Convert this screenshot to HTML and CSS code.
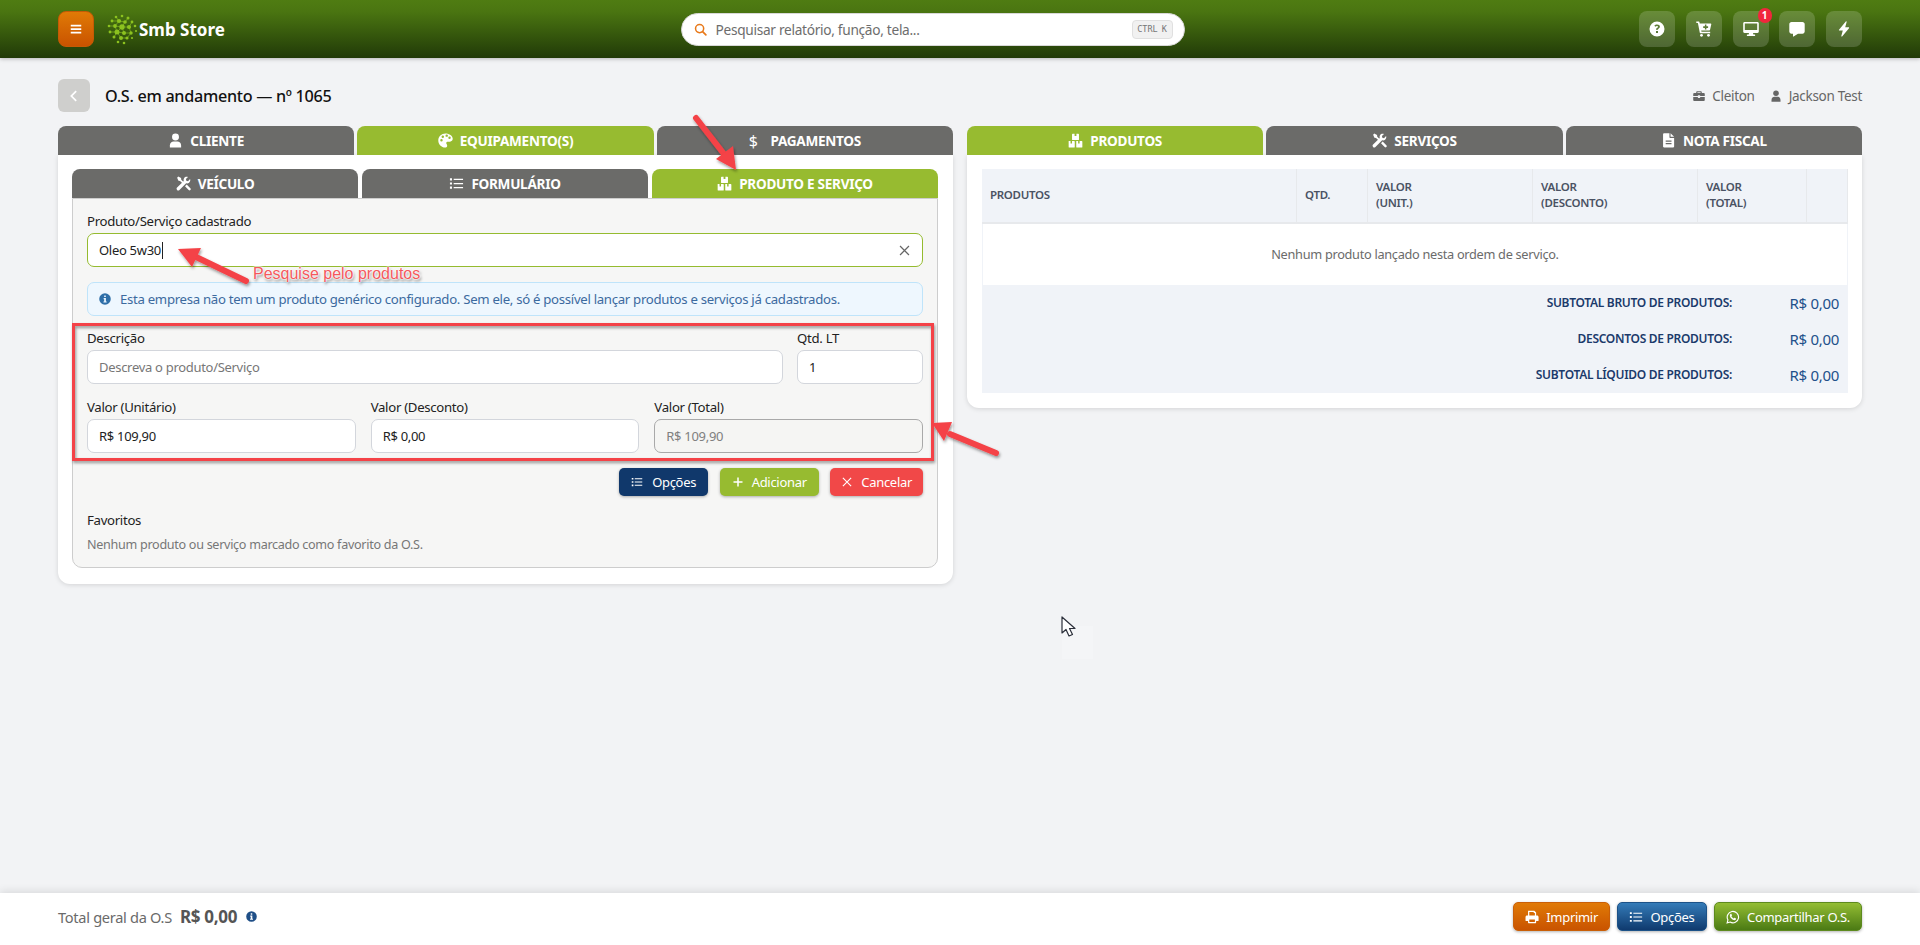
FILE: index.html
```html
<!DOCTYPE html>
<html lang="pt-BR">
<head>
    <meta charset="utf-8">
    <title>O.S. em andamento</title>
    <link rel="stylesheet" href="styles.css">
</head>
<body>
    <svg class="icon-defs" width="0" height="0">
        <symbol id="i-bars" viewBox="0 0 16 16"><path d="M2 3h12v2H2zM2 7h12v2H2zM2 11h12v2H2z"/></symbol>
        <symbol id="i-user" viewBox="0 0 16 16"><circle cx="8" cy="4.2" r="3.7"/><path d="M2 15.5v-2.3C2 10.6 4 9 6 9h4c2 0 4 1.600 4 4.200v2.300z"/></symbol>
        <symbol id="i-palette" viewBox="0 0 16 16"><path fill-rule="evenodd" d="M8 .5C3.700.5.300 3.800.300 8c0 4.300 3.400 7.500 7.300 7.500 1.500 0 2.200-1 2.200-2 0-1.300-1-1.700-1-2.800 0-1 .8-1.500 1.800-1.500h2.200c1.500 0 2.900-1.100 2.900-3C15.700 2.900 12 .5 8 .5zM3.700 9a1.300 1.300 0 1 1 0-2.600 1.300 1.300 0 0 1 0 2.600zm1.400-3.800a1.300 1.300 0 1 1 0-2.600 1.300 1.300 0 0 1 0 2.600zm4.200-1.100a1.300 1.300 0 1 1 0-2.600 1.300 1.300 0 0 1 0 2.600zm3 2.300a1.300 1.300 0 1 1 0-2.600 1.300 1.300 0 0 1 0 2.600z"/></symbol>
        <symbol id="i-tools" viewBox="0 0 16 16"><path d="M1.200 1.800 2.400.6l3 1.600.2 1.700 3.600 3.600-1.300 1.300-3.600-3.600-1.700-.2z"/><path d="M15 3.300l-2.200 2.200-1.800-.4-.4-1.800L12.800 1c-1.700-.6-3.400-.1-4.200 1.300-.6 1-.6 2-.3 2.900L.9 12.600a1.800 1.800 0 0 0 2.500 2.500l7.400-7.400c1 .3 2 .2 2.900-.3 1.400-.9 1.900-2.800 1.300-4.100z"/><path d="M9.600 10.900l1.800-1.800 3.900 3.900a1.300 1.300 0 0 1-1.800 1.900z"/></symbol>
        <symbol id="i-list" viewBox="0 0 16 16"><path d="M1 2.500h2.200v2.200H1zM1 6.900h2.200v2.200H1zM1 11.300h2.200v2.200H1zM5 3h10v1.300H5zM5 7.400h10v1.300H5zM5 11.800h10v1.300H5z"/></symbol>
        <symbol id="i-boxes" viewBox="0 0 16 16"><path d="M5 .8h2v2.500h2V.8h2c.4 0 .7.3.7.7v5.300c0 .4-.3.700-.7.700H5c-.4 0-.7-.3-.7-.7V1.500c0-.4.3-.7.700-.7z"/><path d="M.7 8.600h2v2.500h1.600V8.600h2.300c.3 0 .6.300.6.600v5.600c0 .3-.3.600-.6.600H1.300c-.3 0-.6-.3-.6-.6z"/><path d="M8.800 8.600h2v2.500h1.600V8.600h2.300c.3 0 .6.300.6.600v5.600c0 .3-.3.600-.6.600H9.400c-.3 0-.6-.3-.6-.6z"/></symbol>
        <symbol id="i-file" viewBox="0 0 16 16"><path fill-rule="evenodd" d="M3.200.3H9v4.300c0 .4.300.7.700.7H14v9.200c0 .5-.4 1-1 1H3.200c-.6 0-1-.5-1-1V1.300c0-.6.400-1 1-1zM5 8v1.300h6.200V8zm0 2.700V12h6.200v-1.300zM10.200.3 14 4.100h-3.800z"/></symbol>
        <symbol id="i-search" viewBox="0 0 16 16"><circle cx="6.900" cy="6.900" r="5" fill="none" stroke="currentColor" stroke-width="1.900"/><path d="m10.600 10.600 4 4" fill="none" stroke="currentColor" stroke-width="2.100" stroke-linecap="round"/></symbol>
        <symbol id="i-help" viewBox="0 0 16 16"><path fill-rule="evenodd" d="M8 .5a7.500 7.500 0 1 0 0 15 7.500 7.500 0 0 0 0-15zM7 10h2v2H7zm0-1.200V8c0-1 2-1.200 2-2.300 0-.5-.5-.8-1-.8-.7 0-1.100.3-1.500.8L5.300 4.800C6 3.900 6.900 3.400 8.100 3.400c1.600 0 2.800.9 2.800 2.200 0 1.900-2 2-2 3.200z"/></symbol>
        <symbol id="i-cart" viewBox="0 0 16 16"><path fill-rule="evenodd" d="M.3.600h2.500c.3 0 .5.200.6.500l.3 1.300h11c.4 0 .7.400.6.800l-1.300 5.800c-.1.300-.3.500-.6.500H5.200l.3 1.300h8.700v1.500H4.400c-.3 0-.5-.2-.6-.5L1.900 2.100H.3zM8.900 3.600v1.700H7.200v1.600h1.700v1.700h1.500V6.900h1.700V5.300h-1.700V3.600z"/><circle cx="5.500" cy="14.300" r="1.400"/><circle cx="12.500" cy="14.300" r="1.400"/></symbol>
        <symbol id="i-desktop" viewBox="0 0 16 16"><path fill-rule="evenodd" d="M1.500 1h13c.7 0 1.300.6 1.300 1.300v8.500c0 .7-.6 1.200-1.300 1.200H10l.4 1.600h1.700V15H3.900v-1.400h1.700L6 12H1.500C.8 12 .2 11.500.2 10.800V2.300C.2 1.600.8 1 1.500 1zm.3 1.600V9h12.400V2.600z"/></symbol>
        <symbol id="i-comment" viewBox="0 0 16 16"><path d="M2.500 1h11c1.200 0 2.200 1 2.200 2.200v7.300c0 1.200-1 2.200-2.200 2.200H9L4.600 15.600c-.3.200-.6 0-.6-.3v-2.600H2.500c-1.200 0-2.200-1-2.200-2.200V3.200C.3 2 1.300 1 2.500 1z"/></symbol>
        <symbol id="i-bolt" viewBox="0 0 16 16"><path d="M9.800.4 3 8.700c-.3.400 0 .9.400.9h3.400L5.300 15c-.1.500.5.800.8.400l6.900-8.200c.3-.4 0-.9-.4-.9H9.200l1.500-5.500c.1-.5-.6-.8-.9-.4z"/></symbol>
        <symbol id="i-briefcase" viewBox="0 0 16 16"><path d="M5.500 1.500h5c.7 0 1.200.5 1.200 1.200V4h2.800c.7 0 1.200.5 1.200 1.200V8H9.500V7h-3v1H.3V5.200C.3 4.500.8 4 1.500 4h2.800V2.700c0-.7.500-1.200 1.200-1.200zm.4 1.500V4h4.200V3zM.3 9.200h6.200v1.300h3V9.200h6.200v4.100c0 .7-.5 1.200-1.200 1.200h-13c-.7 0-1.200-.5-1.200-1.200z"/></symbol>
        <symbol id="i-info" viewBox="0 0 16 16"><path fill-rule="evenodd" d="M8 .3a7.700 7.700 0 1 0 0 15.400A7.700 7.700 0 0 0 8 .3zM6.900 3.200h2.200v2.200H6.900zM6.200 6.700h3v4.600h1v1.500H5.900v-1.500h1V8.200h-.7z"/></symbol>
        <symbol id="i-print" viewBox="0 0 16 16"><path fill-rule="evenodd" d="M3.500.8h7.200l2 2v3.400h1.100c.9 0 1.700.8 1.700 1.700V12c0 .4-.3.700-.7.700h-2.100v2c0 .3-.3.500-.5.500H4c-.3 0-.5-.2-.5-.5v-2H1.300c-.4 0-.7-.3-.7-.7V7.900c0-.9.800-1.700 1.700-1.700h1.200zm1.400 1.400v4h6.400V3.500h-1.300V2.200zM4.900 10.900v2.900h6.400v-2.900z"/></symbol>
        <symbol id="i-whatsapp" viewBox="0 0 16 16"><path fill="none" stroke="currentColor" stroke-width="1.300" d="M1.300 14.700l.9-3.400A6.500 6.500 0 1 1 4.700 13.800z"/><path d="M5.600 4.400c.3 0 .5 0 .6.300l.6 1.400c.1.200 0 .4-.1.500l-.5.600c.6 1.200 1.400 1.900 2.600 2.500l.6-.7c.1-.2.300-.2.500-.1l1.400.7c.2.100.3.200.3.400 0 1.100-1 1.600-1.800 1.600-2.400-.1-5.300-2.800-5.400-5.300 0-.9.400-1.500 1-1.900z"/></symbol>
        <symbol id="i-plus" viewBox="0 0 16 16"><path d="M7 2h2v5h5v2H9v5H7V9H2V7h5z"/></symbol>
        <symbol id="i-close" viewBox="0 0 16 16"><path d="M2.500 2.500l11 11M13.500 2.500l-11 11" fill="none" stroke="currentColor" stroke-width="1.500"/></symbol>
        <symbol id="i-back" viewBox="0 0 16 16"><path d="M10.500 2.500 5 8l5.500 5.500" fill="none" stroke="currentColor" stroke-width="2"/></symbol>
    </svg>

    <header class="topbar">
        <div class="brand">
            <button class="menu-btn"><svg class="ico"><use href="#i-bars"/></svg></button>
            <svg class="logo" viewBox="0 0 32 32">
                <path d="M10 4 13 8 9 13 11 19 15 25M22 5 19 9 16 14 11 19M16 14 23 14 25 20 21 25 15 25M18 20 16 14M23 14 26 9M6 8 13 8 19 9M3 13 9 13 16 14M4 19 11 19 18 20 25 20M8 24 11 19" fill="none" stroke="#7fb51f" stroke-width=".7"/>
                <g fill="#8cc21f">
                    <circle cx="16" cy="3" r="1.300"/><circle cx="10" cy="4" r="1.300"/><circle cx="22" cy="5" r="1.500"/>
                    <circle cx="6" cy="8" r="1.400"/><circle cx="13" cy="8" r="2.100"/><circle cx="19" cy="9" r="1.800"/><circle cx="26" cy="9" r="1.400"/>
                    <circle cx="3" cy="13" r="1.300"/><circle cx="9" cy="13" r="1.900"/><circle cx="16" cy="14" r="2.700"/><circle cx="23" cy="14" r="2.100"/><circle cx="29" cy="13" r="1.300"/>
                    <circle cx="4" cy="19" r="1.400"/><circle cx="11" cy="19" r="2.500"/><circle cx="18" cy="20" r="2"/><circle cx="25" cy="20" r="1.700"/><circle cx="30" cy="18" r="1.100"/>
                    <circle cx="8" cy="24" r="1.500"/><circle cx="15" cy="25" r="2"/><circle cx="21" cy="25" r="1.600"/><circle cx="26" cy="25" r="1.100"/>
                    <circle cx="12" cy="29" r="1.300"/><circle cx="18" cy="30" r="1.300"/>
                </g>
            </svg>
            <span class="brand-name">Smb Store</span>
        </div>

        <div class="search">
            <svg class="ico search-ico"><use href="#i-search"/></svg>
            <span class="search-text">Pesquisar relatório, função, tela...</span>
            <kbd class="search-kbd">CTRL K</kbd>
        </div>

        <div class="top-actions">
            <button class="top-btn"><svg class="ico"><use href="#i-help"/></svg></button>
            <button class="top-btn"><svg class="ico"><use href="#i-cart"/></svg></button>
            <button class="top-btn"><svg class="ico"><use href="#i-desktop"/></svg><span class="badge">1</span></button>
            <button class="top-btn"><svg class="ico"><use href="#i-comment"/></svg></button>
            <button class="top-btn"><svg class="ico"><use href="#i-bolt"/></svg></button>
        </div>
    </header>

    <main class="page">
        <div class="page-head">
            <div class="page-title">
                <button class="back-btn"><svg class="ico"><use href="#i-back"/></svg></button>
                <h1>O.S. em andamento — nº 1065</h1>
            </div>
            <div class="page-meta">
                <span><svg class="ico"><use href="#i-briefcase"/></svg>Cleiton</span>
                <span><svg class="ico"><use href="#i-user"/></svg>Jackson Test</span>
            </div>
        </div>

        <div class="columns">
            <section class="col">
                <div class="tabs">
                    <div class="tab"><svg class="ico"><use href="#i-user"/></svg>CLIENTE</div>
                    <div class="tab active"><svg class="ico"><use href="#i-palette"/></svg>EQUIPAMENTO(S)</div>
                    <div class="tab"><span class="tab-dollar">$</span>PAGAMENTOS</div>
                </div>
                <div class="card card-form">
                    <div class="tabs tabs-inner">
                        <div class="tab"><svg class="ico"><use href="#i-tools"/></svg>VEÍCULO</div>
                        <div class="tab"><svg class="ico"><use href="#i-list"/></svg>FORMULÁRIO</div>
                        <div class="tab active"><svg class="ico"><use href="#i-boxes"/></svg>PRODUTO E SERVIÇO</div>
                    </div>
                    <div class="panel">
                        <div class="field">
                            <label>Produto/Serviço cadastrado</label>
                            <div class="input input-search">
                                <span class="typed">Oleo 5w30</span>
                                <svg class="ico clear-ico"><use href="#i-close"/></svg>
                            </div>
                        </div>
                        <div class="alert">
                            <svg class="ico"><use href="#i-info"/></svg>
                            Esta empresa não tem um produto genérico configurado. Sem ele, só é possível lançar produtos e serviços já cadastrados.
                        </div>
                        <div class="row-desc">
                            <div class="field">
                                <label>Descrição</label>
                                <input class="input" placeholder="Descreva o produto/Serviço">
                            </div>
                            <div class="field">
                                <label>Qtd. LT</label>
                                <input class="input" value="1">
                            </div>
                        </div>
                        <div class="row-values">
                            <div class="field">
                                <label>Valor (Unitário)</label>
                                <input class="input" value="R$ 109,90">
                            </div>
                            <div class="field">
                                <label>Valor (Desconto)</label>
                                <input class="input" value="R$ 0,00">
                            </div>
                            <div class="field">
                                <label>Valor (Total)</label>
                                <input class="input input-off" value="R$ 109,90" disabled>
                            </div>
                        </div>
                        <div class="form-actions">
                            <button class="btn btn-navy"><svg class="ico"><use href="#i-list"/></svg>Opções</button>
                            <button class="btn btn-green"><svg class="ico"><use href="#i-plus"/></svg>Adicionar</button>
                            <button class="btn btn-red"><svg class="ico"><use href="#i-close"/></svg>Cancelar</button>
                        </div>
                        <div class="fav-title">Favoritos</div>
                        <p class="fav-empty">Nenhum produto ou serviço marcado como favorito da O.S.</p>
                    </div>
                </div>
            </section>

            <section class="col">
                <div class="tabs">
                    <div class="tab active"><svg class="ico"><use href="#i-boxes"/></svg>PRODUTOS</div>
                    <div class="tab"><svg class="ico"><use href="#i-tools"/></svg>SERVIÇOS</div>
                    <div class="tab"><svg class="ico"><use href="#i-file"/></svg>NOTA FISCAL</div>
                </div>
                <div class="card card-items">
                    <table class="items">
                        <colgroup>
                            <col class="c-prod"><col class="c-qtd"><col class="c-val"><col class="c-val"><col class="c-tot"><col>
                        </colgroup>
                        <thead>
                            <tr>
                                <th>PRODUTOS</th>
                                <th>QTD.</th>
                                <th>VALOR<br>(UNIT.)</th>
                                <th>VALOR<br>(DESCONTO)</th>
                                <th>VALOR<br>(TOTAL)</th>
                                <th></th>
                            </tr>
                        </thead>
                        <tbody>
                            <tr><td colspan="6">Nenhum produto lançado nesta ordem de serviço.</td></tr>
                        </tbody>
                    </table>
                    <div class="totals">
                        <div class="total-row"><span>SUBTOTAL BRUTO DE PRODUTOS:</span><b>R$ 0,00</b></div>
                        <div class="total-row"><span>DESCONTOS DE PRODUTOS:</span><b>R$ 0,00</b></div>
                        <div class="total-row"><span>SUBTOTAL LÍQUIDO DE PRODUTOS:</span><b>R$ 0,00</b></div>
                    </div>
                </div>
            </section>
        </div>
    </main>

    <footer class="bottombar">
        <div class="grand-total">
            Total geral da O.S <strong>R$ 0,00</strong>
            <svg class="ico"><use href="#i-info"/></svg>
        </div>
        <div class="bottom-actions">
            <button class="btn2 btn2-orange"><svg class="ico"><use href="#i-print"/></svg>Imprimir</button>
            <button class="btn2 btn2-blue"><svg class="ico"><use href="#i-list"/></svg>Opções</button>
            <button class="btn2 btn2-green"><svg class="ico"><use href="#i-whatsapp"/></svg>Compartilhar O.S.</button>
        </div>
    </footer>

    <!-- anotacoes desenhadas por cima do print -->
    <svg class="notes" viewBox="0 0 1920 945">
        <defs>
            <filter id="soft" x="-20%" y="-20%" width="140%" height="140%">
                <feDropShadow dx="1" dy="2" stdDeviation="1.500" flood-color="#000" flood-opacity=".4"/>
            </filter>
        </defs>
        <g filter="url(#soft)">
            <rect x="73.500" y="324.500" width="859" height="135" fill="none" stroke="#f44246" stroke-width="3"/>
            <path d="M696 118 724 154" stroke="#f44246" stroke-width="6" stroke-linecap="round"/>
            <path d="M736 170 716 159 733 146z" fill="#f44246"/>
            <path d="M246 281 194 256" stroke="#f44246" stroke-width="6" stroke-linecap="round"/>
            <path d="M178 249 201 248 192 267z" fill="#f44246"/>
            <path d="M996 453 950 434" stroke="#f44246" stroke-width="6" stroke-linecap="round"/>
            <path d="M932 423 952 422 944 441z" fill="#f44246"/>
        </g>
        <g transform="translate(1062 617)">
            <rect x="0" y="9" width="31" height="33" fill="#f4f5f7"/>
            <path d="M0 0v16l4-3.500 3 6.500 3.500-1.500-3-6h5.500z" fill="#fff" stroke="#2b2f3a" stroke-width="1.200" stroke-linejoin="round"/>
        </g>
    </svg>
    <div class="note-text">Pesquise pelo produtos</div>
</body>
</html>
```

FILE: styles.css
```css
* {
    box-sizing: border-box;
}

html, body {
    height: 100%;
}

body {
    margin: 0;
    display: flex;
    flex-direction: column;
    min-height: 945px;
    background: #f2f3f5;
    color: #222;
    font-family: "Noto Sans", "Open Sans", sans-serif;
    font-size: 13px;
    letter-spacing: -0.3px;
    overflow: hidden;
}

button {
    font-family: inherit;
    letter-spacing: inherit;
    cursor: pointer;
}

.icon-defs {
    position: absolute;
}

.ico {
    display: block;
    flex: none;
    width: 14px;
    height: 14px;
    fill: currentColor;
}

/* barra de cima */
.topbar {
    flex: none;
    height: 58px;
    padding: 0 58px;
    display: flex;
    align-items: center;
    justify-content: space-between;
    background: linear-gradient(#4f7c12, #4a7511 20%, #213a08);
    box-shadow: 0 1px 4px rgba(0, 0, 0, .25);
}

.brand {
    display: flex;
    align-items: center;
    width: 168px;
}

.menu-btn {
    width: 36px;
    height: 36px;
    padding: 0;
    display: flex;
    align-items: center;
    justify-content: center;
    color: #fff;
    border: 1px solid #c55a05;
    border-radius: 8px;
    background: linear-gradient(#e07a06, #c95300);
}

.logo {
    width: 32px;
    height: 32px;
    margin-left: 12px;
    flex: none;
}

.brand-name {
    margin-left: 1px;
    color: #fff;
    font-size: 17px;
    font-weight: 700;
    letter-spacing: 0;
    white-space: nowrap;
}

.search {
    width: 504px;
    height: 33px;
    padding: 0 11px 0 12px;
    display: flex;
    align-items: center;
    background: #fff;
    border: 1px solid #d8d8d8;
    border-radius: 17px;
}

.search-ico {
    width: 13px;
    height: 13px;
    color: #e8791a;
    fill: currentColor;
}

.search-text {
    margin-left: 9px;
    flex: 1;
    color: #6d6d6d;
    font-size: 13.700px;
}

.search-kbd {
    width: 41px;
    height: 19px;
    text-align: center;
    line-height: 17px;
    font-family: "DejaVu Sans Mono", monospace;
    font-size: 8.500px;
    letter-spacing: 0;
    word-spacing: -1px;
    color: #777;
    background: #f1f1f1;
    border: 1px solid #e0e0e0;
    border-radius: 4px;
}

.top-actions {
    display: flex;
    gap: 10.750px;
}

.top-btn {
    position: relative;
    width: 36px;
    height: 36px;
    padding: 0;
    display: flex;
    align-items: center;
    justify-content: center;
    color: #fff;
    border: 0;
    border-radius: 8px;
    background: rgba(255, 255, 255, .17);
}

.top-btn .ico {
    width: 16px;
    height: 16px;
}

.badge {
    position: absolute;
    top: -3px;
    right: -3px;
    width: 14px;
    height: 15px;
    border-radius: 8px;
    background: #f1263c;
    color: #fff;
    font-size: 10px;
    font-weight: 700;
    line-height: 15px;
    text-align: center;
}

/* conteudo */
.page {
    flex: 1;
    padding: 21px 58px 0;
}

.page-head {
    height: 33px;
    display: flex;
    align-items: center;
    justify-content: space-between;
}

.page-title {
    display: flex;
    align-items: center;
    gap: 15px;
}

.page-title h1 {
    margin: 0;
    color: #111;
    font-size: 16.200px;
    font-weight: 500;
}

.back-btn {
    width: 32px;
    height: 33px;
    padding: 0;
    display: flex;
    align-items: center;
    justify-content: center;
    color: #fff;
    border: 0;
    border-radius: 6px;
    background: #cfcfcd;
}

.page-meta {
    display: flex;
    gap: 15px;
    color: #666;
    font-size: 13.500px;
}

.page-meta span {
    display: flex;
    align-items: center;
    gap: 7px;
}

.page-meta .ico {
    width: 12px;
    height: 12px;
}

.columns {
    margin-top: 14px;
    display: grid;
    grid-template-columns: 1fr 1fr;
    gap: 14px;
    align-items: start;
}

.tabs {
    display: grid;
    grid-template-columns: repeat(3, 1fr);
    gap: 3px;
}

.tab {
    height: 29px;
    display: flex;
    align-items: center;
    justify-content: center;
    gap: 7px;
    color: #fff;
    font-size: 13.600px;
    font-weight: 700;
    background: #6b6b69;
    border-radius: 8px 8px 0 0;
}

.tab .ico {
    width: 15px;
    height: 15px;
}

.tab.active {
    background: #97bb30;
}

.tab-dollar {
    font-size: 16px;
    font-weight: 400;
    margin-right: 6px;
}

.card {
    background: #fff;
    border-radius: 0 0 12px 12px;
    box-shadow: 0 1px 5px rgba(0, 0, 0, .13);
}

.card-form {
    padding: 14px 15px 16px 14px;
}

.card-items {
    padding: 14px 14px 15px 15px;
}

.tabs-inner {
    gap: 4px;
}

.panel {
    padding: 13px 14px 14px;
    height: 370px;
    background: #f6f6f5;
    border: 1px solid #cdcdcd;
    border-radius: 0 0 10px 10px;
}

.field label {
    display: block;
    height: 18px;
    margin-bottom: 3px;
    line-height: 18px;
    color: #222;
    font-size: 13.200px;
}

.input {
    display: block;
    width: 100%;
    height: 34px;
    padding: 0 11px;
    color: #222;
    font-family: inherit;
    font-size: 13px;
    letter-spacing: inherit;
    background: #fff;
    border: 1px solid #d3d6dc;
    border-radius: 7px;
    outline: 0;
}

.input::placeholder {
    color: #777;
}

.input-search {
    display: flex;
    align-items: center;
    justify-content: space-between;
    border-color: #95bb2f;
}

.typed {
    padding-right: 1px;
    border-right: 1px solid #222;
    line-height: 17px;
}

.clear-ico {
    width: 13px;
    height: 13px;
    color: #666;
}

.input-off {
    color: #808080;
    background: #f5f5f3;
    border-color: #a9a9a9;
}

.alert {
    height: 34px;
    margin-top: 15px;
    padding: 0 11px;
    display: flex;
    align-items: center;
    gap: 9px;
    color: #3c6a9e;
    font-size: 13.200px;
    background: #eef7fe;
    border: 1px solid #bfe4fa;
    border-radius: 7px;
}

.alert .ico {
    width: 12px;
    height: 12px;
    color: #2f6fa8;
}

.row-desc {
    margin-top: 13px;
    display: grid;
    grid-template-columns: 1fr 126px;
    gap: 14px;
}

.row-values {
    margin-top: 14px;
    display: grid;
    grid-template-columns: repeat(3, 1fr);
    gap: 15px;
}

.form-actions {
    margin-top: 15px;
    display: flex;
    justify-content: flex-end;
    gap: 11.500px;
}

.btn {
    height: 28px;
    padding: 0 12px;
    display: flex;
    align-items: center;
    gap: 9px;
    color: #fff;
    font-size: 13px;
    border: 0;
    border-radius: 5px;
    box-shadow: 0 1px 3px rgba(0, 0, 0, .3);
}

.btn .ico {
    width: 12px;
    height: 12px;
}

.btn-navy {
    background: #10386b;
}

.btn-green {
    gap: 8px;
    background: #97bb30;
}

.btn-red {
    padding: 0 11px;
    gap: 8px;
    background: #f14848;
}

.fav-title {
    margin-top: 15px;
    height: 18px;
    line-height: 18px;
    font-size: 13.200px;
}

.fav-empty {
    margin: 7px 0 0;
    height: 18px;
    line-height: 18px;
    color: #777;
    font-size: 12.600px;
}

/* tabela de produtos */
.items {
    width: 100%;
    table-layout: fixed;
    border-collapse: separate;
    border-spacing: 0;
    background: #f0f3f8;
}

.c-prod {
    width: 315px;
}

.c-qtd {
    width: 71px;
}

.c-val {
    width: 165px;
}

.c-tot {
    width: 109px;
}

.items th {
    height: 55px;
    padding: 0 8px 1px;
    text-align: left;
    color: #4a5263;
    font-size: 11.500px;
    font-weight: 600;
    line-height: 16px;
    border-right: 1px solid #e7e9ec;
    border-bottom: 2px solid #e7e9ec;
}

.items td {
    height: 61px;
    padding-bottom: 3px;
    text-align: center;
    color: #6b6b6b;
    font-size: 12.750px;
    background: #fff;
    border: solid #f0f3f8;
    border-width: 0 1px;
}

.totals {
    background: #f0f3f8;
}

.total-row {
    height: 36px;
    padding: 0 9px 1px 0;
    display: flex;
    align-items: center;
    justify-content: flex-end;
    color: #1b3a6b;
    font-size: 12px;
    font-weight: 600;
}

.total-row b {
    width: 107px;
    text-align: right;
    color: #22508a;
    font-size: 15px;
    font-weight: 400;
}

/* rodape */
.bottombar {
    flex: none;
    height: 52px;
    padding: 0 58px 5px;
    display: flex;
    align-items: center;
    justify-content: space-between;
    background: #fff;
    box-shadow: 0 -2px 8px rgba(0, 0, 0, .1);
}

.grand-total {
    display: flex;
    align-items: center;
    color: #6a6a6a;
    font-size: 14.600px;
}

.grand-total strong {
    margin: 0 9px 0 8px;
    color: #555;
    font-size: 17px;
    font-weight: 700;
}

.grand-total .ico {
    width: 11px;
    height: 11px;
    color: #1f4f87;
}

.bottom-actions {
    display: flex;
    gap: 7px;
}

.btn2 {
    height: 29px;
    padding: 0 11px;
    display: flex;
    align-items: center;
    gap: 7px;
    color: #fff;
    font-size: 13px;
    border-radius: 5px;
    box-shadow: 0 1px 3px rgba(0, 0, 0, .3);
}

.btn2-orange {
    background: linear-gradient(#e07a06, #c95300);
    border: 1px solid #c95f08;
}

.btn2-blue {
    min-width: 90px;
    justify-content: center;
    background: linear-gradient(#347bb8, #0f3a6e);
    border: 1px solid #1c5288;
}

.btn2-green {
    background: linear-gradient(#93bd33, #4b7a14);
    border: 1px solid #5d8a1e;
}

/* anotacoes */
.notes {
    position: absolute;
    top: 0;
    left: 0;
    width: 1920px;
    height: 945px;
    pointer-events: none;
}

.note-text {
    position: absolute;
    top: 265px;
    left: 253px;
    color: #f4585c;
    font-family: "Liberation Sans", Arial, sans-serif;
    font-size: 16px;
    letter-spacing: 0;
    white-space: nowrap;
    text-shadow: 0 0 1px #fff, 0 0 2px #fff, 0 0 2px #fff, 0 0 3px #fff, 1px 2px 3px rgba(0, 0, 0, .6);
}
```
